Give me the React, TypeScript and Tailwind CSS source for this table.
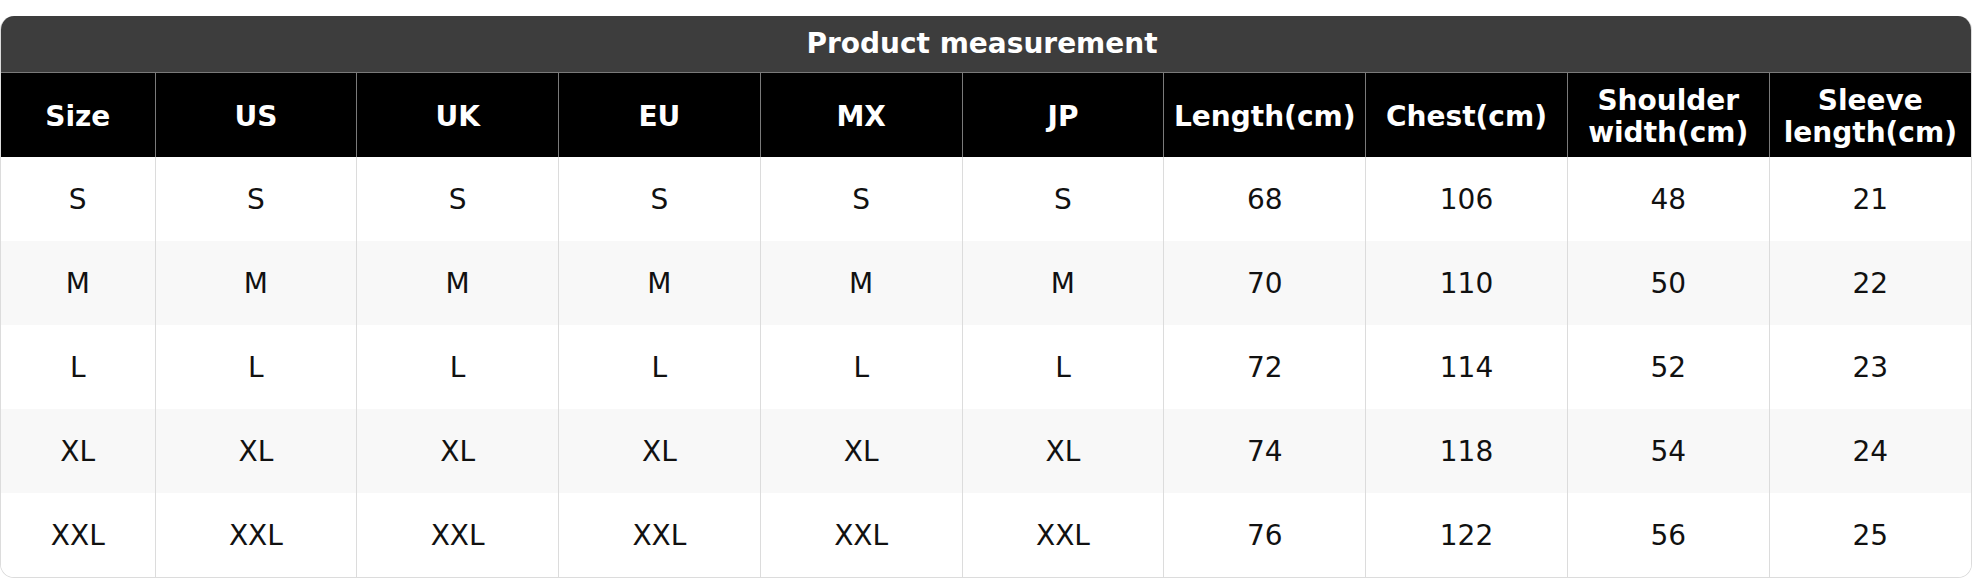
const headers = ["Size", "US", "UK", "EU", "MX", "JP", "Length(cm)", "Chest(cm)", "Shoulder width(cm)", "Sleeve length(cm)"];

const sizes = ["S", "M", "L", "XL", "XXL"];
const measures = [
    [68, 106, 48, 21],
    [70, 110, 50, 22],
    [72, 114, 52, 23],
    [74, 118, 54, 24],
    [76, 122, 56, 25],
];

const rows = sizes.map((s, i) => [s, s, s, s, s, s, ...measures[i].map(String)]);

export default function App() {
    return (
        <div className="bg-white pt-4 w-[1972px] h-[580px]" style={{ fontFamily: '"DejaVu Sans", sans-serif' }}>
            <div className="rounded-[14px] overflow-hidden border border-[#dcdcdc] border-t-0">
                <div className="h-[57px] bg-[#3d3d3d] border-b border-[#7a7a7a] flex items-center justify-center pr-2 text-white font-bold text-[28px] leading-none">
                    Product measurement
                </div>
                <table className="w-full table-fixed border-collapse">
                    <colgroup>
                        <col className="w-[154px]" />
                    </colgroup>
                    <thead>
                        <tr className="h-[84px] bg-black">
                            {headers.map((h, i) => (
                                <th
                                    key={h}
                                    className={`text-white font-bold text-[28px] leading-[32px] text-center px-1 pt-[3px] ${i > 0 ? "border-l border-[#7a7a7a]" : ""}`}
                                >
                                    {h}
                                </th>
                            ))}
                        </tr>
                    </thead>
                    <tbody>
                        {rows.map((r, ri) => (
                            <tr key={ri} className={`h-[84px] ${ri % 2 === 1 ? "bg-[#f8f8f8]" : "bg-white"}`}>
                                {r.map((c, ci) => (
                                    <td
                                        key={ci}
                                        className={`text-center text-[28px] leading-[32px] text-[#111] pt-[2px] ${ci > 0 ? "border-l border-[#dcdcdc]" : ""}`}
                                    >
                                        {c}
                                    </td>
                                ))}
                            </tr>
                        ))}
                    </tbody>
                </table>
            </div>
        </div>
    );
}
